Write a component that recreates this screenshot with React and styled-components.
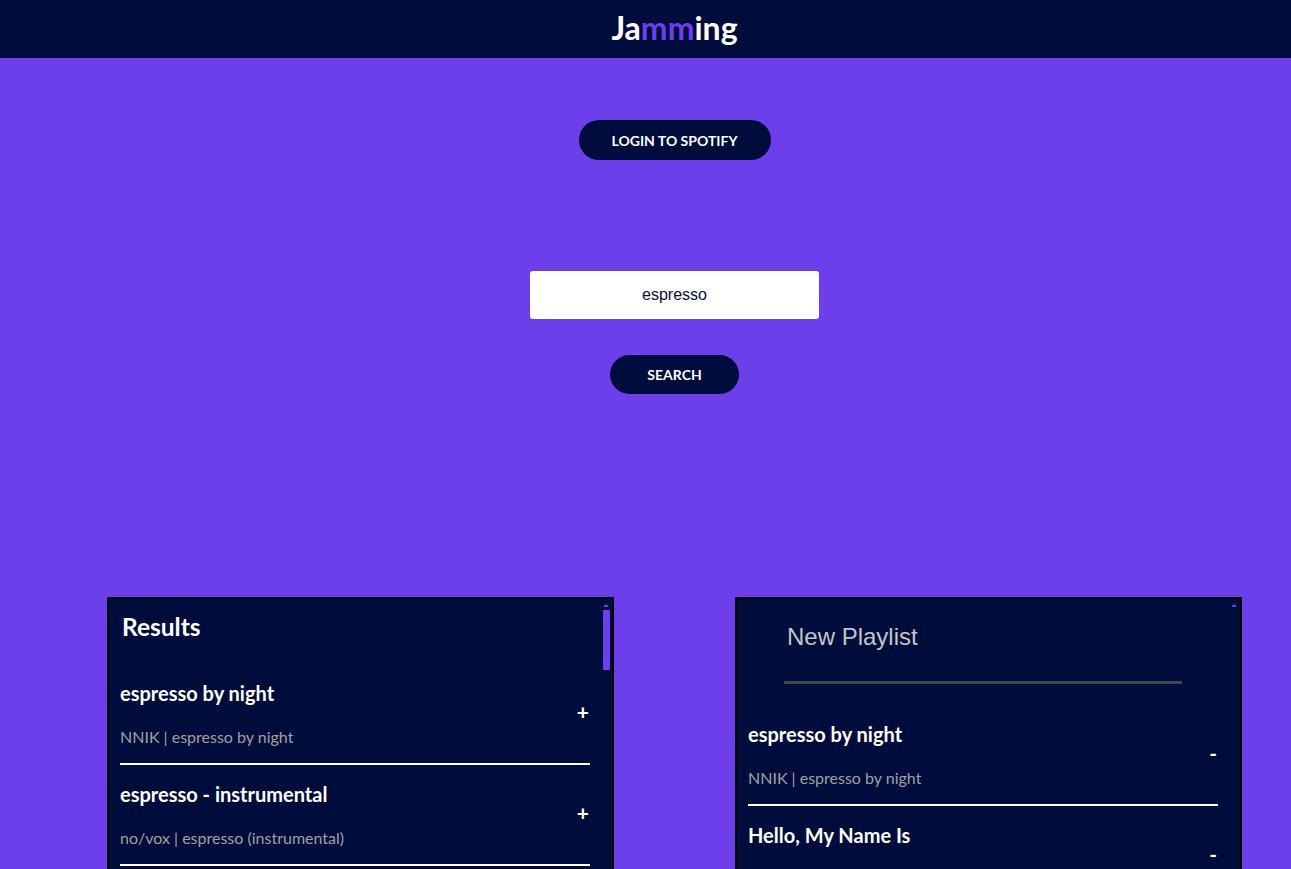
import React, { useState } from "react";
import styled, { createGlobalStyle } from "styled-components";

const GlobalStyle = createGlobalStyle`
  html, body {
    margin: 0;
    padding: 0;
    overflow: hidden;
    background: #6c3fea;
    font-family: "Lato", "Noto Sans", sans-serif;
  }
  * {
    box-sizing: border-box;
  }
`;

const results = [
  { id: 1, name: "espresso by night", artist: "NNIK", album: "espresso by night" },
  { id: 2, name: "espresso - instrumental", artist: "no/vox", album: "espresso (instrumental)" },
  { id: 3, name: "Espresso", artist: "Sabrina Carpenter", album: "Espresso" },
  { id: 4, name: "espresso", artist: "lofi beats", album: "morning coffee" },
  { id: 5, name: "Espresso Macchiato", artist: "Tommy Cash", album: "Espresso Macchiato" },
];

const playlist = [
  { id: 1, name: "espresso by night", artist: "NNIK", album: "espresso by night" },
  { id: 6, name: "Hello, My Name Is", artist: "Not Rated", album: "Hello, My Name Is" },
  { id: 7, name: "Coffee Break", artist: "Chillhop", album: "Coffee Break" },
];

function Track({ track, action }) {
  return (
    <TrackRow>
      <TrackInfo>
        <TrackName>{track.name}</TrackName>
        <TrackMeta>
          {track.artist} | {track.album}
        </TrackMeta>
      </TrackInfo>
      <TrackAction>{action}</TrackAction>
    </TrackRow>
  );
}

function App() {
  const [term, setTerm] = useState("espresso");
  const [name, setName] = useState("New Playlist");
  return (
    <>
      <GlobalStyle />
      <Header>
        <Logo>
          Ja<Accent>mm</Accent>ing
        </Logo>
      </Header>
      <Main>
        <PillButton>LOGIN TO SPOTIFY</PillButton>
        <SearchBar>
          <SearchInput value={term} onChange={(e) => setTerm(e.target.value)} />
          <PillButton small>SEARCH</PillButton>
        </SearchBar>
        <Lists>
          <PanelFrame>
            <Panel>
              <PanelTitle>Results</PanelTitle>
              <TrackList>
                {results.map((t) => (
                  <Track key={t.id} track={t} action="+" />
                ))}
              </TrackList>
            </Panel>
            <Gutter>
              <Arrow />
              <Thumb />
            </Gutter>
          </PanelFrame>
          <PanelFrame>
            <Panel>
              <PlaylistName value={name} onChange={(e) => setName(e.target.value)} />
              <TrackList>
                {playlist.map((t) => (
                  <Track key={t.id} track={t} action="-" />
                ))}
              </TrackList>
            </Panel>
            <Gutter>
              <Arrow />
            </Gutter>
          </PanelFrame>
        </Lists>
      </Main>
    </>
  );
}

export default App;

const Header = styled.header`
  height: 58px;
  background: #000c3c;
  display: flex;
  align-items: center;
  justify-content: center;
  width: 1349px;
`;

const Logo = styled.h1`
  margin: 0;
  color: #fff;
  font-size: 32px;
  font-weight: 700;
  line-height: 1;
  padding-bottom: 3px;
`;

const Accent = styled.span`
  color: #6c3fea;
`;

const Main = styled.main`
  width: 1349px;
  display: flex;
  flex-direction: column;
  align-items: center;
  padding-top: 62px;
`;

const PillButton = styled.button`
  height: ${(p) => (p.small ? "39px" : "40px")};
  width: ${(p) => (p.small ? "129px" : "192px")};
  border: none;
  border-radius: 20px;
  background: #000c3c;
  color: #fff;
  font-family: "Lato", "Noto Sans", sans-serif;
  font-weight: 700;
  font-size: 14px;
  cursor: pointer;
`;

const SearchBar = styled.div`
  display: flex;
  flex-direction: column;
  align-items: center;
  gap: 36px;
  margin-top: 111px;
`;

const SearchInput = styled.input`
  width: 289px;
  height: 48px;
  border: none;
  border-radius: 3px;
  text-align: center;
  font-family: "Liberation Sans", Arial, sans-serif;
  font-size: 16px;
  color: #0a0f2e;
  outline: none;
`;

const Lists = styled.section`
  display: flex;
  gap: 121px;
  margin-top: 203px;
`;

const PanelFrame = styled.div`
  position: relative;
  width: 507px;
  height: 520px;
  background: #000c3c;
  border: 2px solid #000;
`;

const Panel = styled.div`
  height: 100%;
  overflow-y: auto;
  scrollbar-width: none;
  display: flex;
  flex-direction: column;
`;

const Gutter = styled.div`
  position: absolute;
  top: 0;
  right: 0;
  bottom: 0;
  width: 10px;
`;

const Arrow = styled.div`
  position: absolute;
  top: 5px;
  left: 1px;
  width: 0;
  height: 0;
  border-left: 3px solid transparent;
  border-right: 3px solid transparent;
  border-bottom: 3px solid #6c3fea;
`;

const Thumb = styled.div`
  position: absolute;
  top: 11px;
  left: 1px;
  width: 7px;
  height: 60px;
  background: #6c3fea;
`;

const PanelTitle = styled.h2`
  margin: 12px 0 0 13px;
  color: #fff;
  font-size: 24.5px;
  line-height: 32px;
  font-weight: 700;
`;

const PlaylistName = styled.input`
  width: 392px;
  height: 30px;
  box-sizing: content-box;
  margin: 23px 0 0 47px;
  padding: 0 3px 29px;
  border: none;
  border-bottom: 3px solid #2f4f4f;
  background: transparent;
  color: #c4c4c4;
  font-family: "Liberation Sans", Arial, sans-serif;
  font-size: 24px;
  outline: none;
`;

const TrackList = styled.div`
  display: flex;
  flex-direction: column;
  margin: 21px 22px 0 11px;
`;

const TrackRow = styled.div`
  display: flex;
  align-items: center;
  justify-content: space-between;
  padding: 17px 0 16px;
  border-bottom: 2px solid #fff;
`;

const TrackInfo = styled.div`
  display: flex;
  flex-direction: column;
  gap: 22px;
`;

const TrackName = styled.h3`
  margin: 0;
  color: #fff;
  font-size: 20px;
  line-height: 24px;
  font-weight: 700;
`;

const TrackMeta = styled.p`
  margin: 0;
  color: #a0a0a0;
  font-size: 16px;
  line-height: 20px;
`;

const TrackAction = styled.button`
  border: none;
  background: transparent;
  color: #fff;
  font-family: "Lato", "Noto Sans", sans-serif;
  font-size: 21px;
  font-weight: 700;
  padding: 0;
  margin: 0 1px 5px 0;
  cursor: pointer;
`;
